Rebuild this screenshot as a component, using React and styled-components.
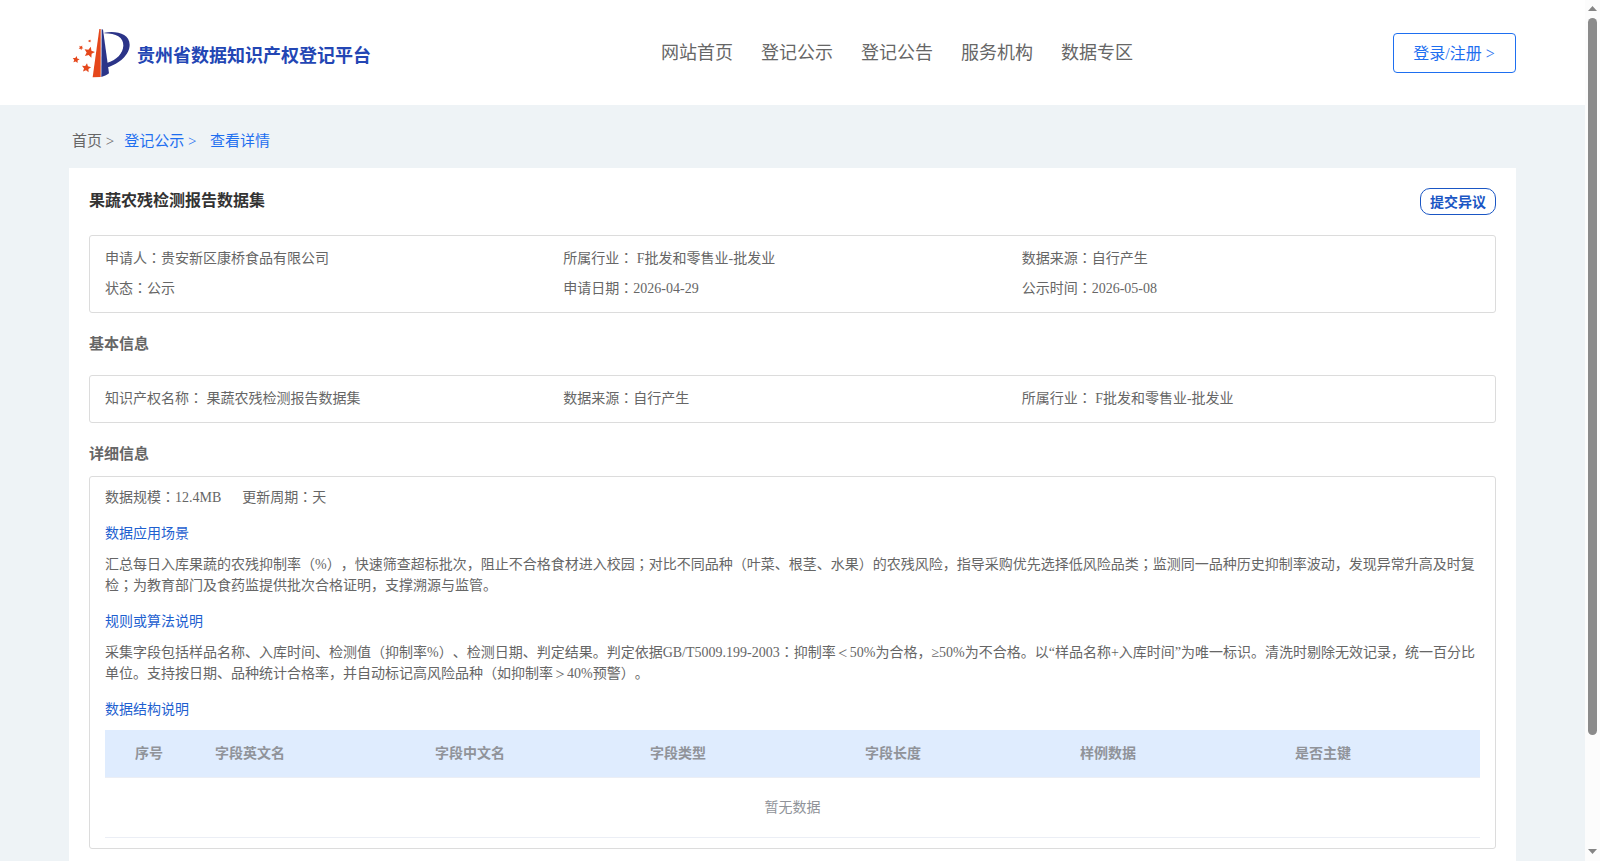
import React from "react";
import styled, { createGlobalStyle } from "styled-components";

const GlobalStyle = createGlobalStyle`
  * { box-sizing: border-box; }
  body {
    margin: 0;
    overflow: hidden;
    font-family: "Liberation Serif", "Noto Sans CJK SC", serif;
    font-size: 14px;
    color: #666;
    text-spacing-trim: space-all;
  }
  h1, h2, h3, p { margin: 0; font-weight: normal; }
`;

const Viewport = styled.div`
  display: flex;
  height: 100vh;
  overflow: hidden;
`;

const Page = styled.div`
  flex: 1;
  min-width: 0;
  background: #eef3f6;
`;

const Header = styled.header`
  display: flex;
  justify-content: space-between;
  height: 105px;
  padding: 0 69px;
  background: #fff;
`;

const Brand = styled.div`
  display: flex;
  align-items: flex-start;
  width: 592px;
  padding: 28px 0 0 3px;
`;

const BrandName = styled.h1`
  margin-left: 7px;
  font-size: 18px;
  line-height: 26px;
  padding-top: 15px;
  font-weight: bold;
  color: #2346b4;
  white-space: nowrap;
`;

const Nav = styled.nav`
  display: flex;
  gap: 28px;
  flex: 1;
  padding-top: 40px;
`;

const NavItem = styled.a`
  font-size: 18px;
  line-height: 26px;
  white-space: nowrap;
`;

const LoginButton = styled.button`
  width: 123px;
  height: 40px;
  margin-top: 33px;
  padding: 0 1px 2px 0;
  border: 1px solid #1e6ff0;
  border-radius: 4px;
  background: #fff;
  color: #1e6ff0;
  font: inherit;
  font-size: 16px;
`;

const Breadcrumb = styled.div`
  display: flex;
  height: 63px;
  padding: 26px 0 0 72px;
  font-size: 15px;
  line-height: 20px;
`;

const Crumb = styled.span`
  margin-right: ${(p) => p.$gap || 0}px;
  color: ${(p) => (p.$active ? "#1e6ff0" : "#666")};
  white-space: pre;
`;

const Card = styled.main`
  height: 900px;
  margin: 0 69px;
  padding: 20px;
  background: #fff;
`;

const TitleRow = styled.div`
  display: flex;
  justify-content: space-between;
  height: 47px;
`;

const Title = styled.h2`
  padding-top: 1px;
  font-size: 16px;
  line-height: 24px;
  font-weight: bold;
  color: #333;
`;

const ObjectButton = styled.button`
  width: 76px;
  height: 27px;
  padding: 0 0 2px;
  border: 1px solid #1a56c4;
  border-radius: 10px;
  background: #fff;
  color: #1a56c4;
  font: inherit;
  font-weight: bold;
`;

const InfoBox = styled.section`
  display: grid;
  grid-template-columns: repeat(3, 1fr);
  grid-auto-rows: 30px;
  padding: 8px 15px;
  border: 1px solid #dcdcdc;
  border-radius: 3px;
  line-height: 30px;
`;

const SectionTitle = styled.h3`
  height: ${(p) => p.$height}px;
  padding-top: 20px;
  font-size: 15px;
  line-height: 22px;
  font-weight: bold;
`;

const DetailBox = styled.section`
  height: 373px;
  padding: 10px 15px 0;
  border: 1px solid #dcdcdc;
  border-radius: 3px;
  line-height: 21px;
`;

const Facts = styled.div`
  display: flex;
  gap: 21px;
`;

const SubTitle = styled.h3`
  margin: 15px 0 10px;
  font-size: 14px;
  line-height: 21px;
  color: #1e5fd0;
`;

const Table = styled.div`
  border-bottom: 1px solid #ebeef5;
`;

const TableHead = styled.div`
  display: grid;
  grid-template-columns: 100px 220px repeat(3, 215px) 215px 1fr;
  height: 48px;
  border-bottom: 1px solid #ebeef5;
  background: #dfecfe;
  color: #909399;
  font-weight: bold;
  line-height: 47px;
`;

const HeadCell = styled.span`
  padding-left: 10px;
  &:first-child { padding-left: 30px; }
`;

const EmptyRow = styled.div`
  height: 59px;
  line-height: 59px;
  color: #909399;
  text-align: center;
`;

/* Colons and semicolons sit in the middle of their cell. */
const MidMark = styled.span`
  font-family: "Noto Sans CJK TC", sans-serif;
  line-height: 1;
`;

/* Full-width comparison signs are drawn small inside a full cell. */
const SmallSign = styled.span`
  padding: 0 2px;
  font-size: 10px;
  line-height: 1;
`;

const ScrollTrack = styled.div`
  display: flex;
  flex-direction: column;
  align-items: center;
  justify-content: space-between;
  width: 15px;
  padding: 6px 0 7px;
  background: #fcfcfc;
`;

const ScrollThumb = styled.div`
  width: 9px;
  height: 717px;
  margin: 7px 0 auto;
  border-radius: 5px;
  background: #8b8b8b;
`;

const Arrow = styled.svg`
  display: block;
  width: 9px;
  height: 5px;
  fill: #858585;
`;

const starPoints = (cx, cy, r, turn) =>
  Array.from({ length: 10 }, (_, i) => {
    const a = ((turn + i * 36 - 90) * Math.PI) / 180;
    const d = i % 2 ? r * 0.48 : r;
    return `${(cx + d * Math.cos(a)).toFixed(1)},${(cy + d * Math.sin(a)).toFixed(1)}`;
  }).join(" ");

const stars = [
  [88, 127, 17, 15],
  [48, 149, 11, 10],
  [79, 174, 14.5, 8],
  [63, 113, 7.5, 30],
  [89, 93, 5, 20],
];

function Logo() {
  return (
    <svg width="58" height="50" viewBox="36 54 174 150">
      <g fill="#e5471b">
        <path d="M118 57h4v144l-24 1z" />
        {stars.map(([x, y, r, t]) => (
          <polygon key={x} points={starPoints(x, y, r, t)} />
        ))}
      </g>
      <g fill="#2b3488">
        <path d="M125 57l4 2 18 131c-7 6-15 9-23 11z" />
        <path d="M133 68C170 61 209 72 209 104C209 134 178 161 142 172L140 159C170 150 189 130 190 107C191 82 168 70 133 70Z" />
      </g>
    </svg>
  );
}

function Prose({ children }) {
  return children.split(/([：；＜＞])/).map((part, i) => {
    if (part === "：" || part === "；") return <MidMark key={i}>{part}</MidMark>;
    if (part === "＜" || part === "＞") return <SmallSign key={i}>{part}</SmallSign>;
    return part;
  });
}

const navItems = ["网站首页", "登记公示", "登记公告", "服务机构", "数据专区"];

const summary = [
  "申请人：贵安新区康桥食品有限公司",
  "所属行业： F批发和零售业-批发业",
  "数据来源：自行产生",
  "状态：公示",
  "申请日期：2026-04-29",
  "公示时间：2026-05-08",
];

const basics = [
  "知识产权名称： 果蔬农残检测报告数据集",
  "数据来源：自行产生",
  "所属行业： F批发和零售业-批发业",
];

const usage =
  "汇总每日入库果蔬的农残抑制率（%），快速筛查超标批次，阻止不合格食材进入校园；对比不同品种（叶菜、根茎、水果）的农残风险，指导采购优先选择低风险品类；监测同一品种历史抑制率波动，发现异常升高及时复检；为教育部门及食药监提供批次合格证明，支撑溯源与监管。";

const rules =
  "采集字段包括样品名称、入库时间、检测值（抑制率%）、检测日期、判定结果。判定依据GB/T5009.199-2003：抑制率＜50%为合格，≥50%为不合格。以“样品名称+入库时间”为唯一标识。清洗时剔除无效记录，统一百分比单位。支持按日期、品种统计合格率，并自动标记高风险品种（如抑制率＞40%预警）。";

const columns = ["序号", "字段英文名", "字段中文名", "字段类型", "字段长度", "样例数据", "是否主键"];

export default function App() {
  return (
    <Viewport>
      <GlobalStyle />
      <Page>
        <Header>
          <Brand>
            <Logo />
            <BrandName>贵州省数据知识产权登记平台</BrandName>
          </Brand>
          <Nav>
            {navItems.map((t) => (
              <NavItem key={t}>{t}</NavItem>
            ))}
          </Nav>
          <LoginButton>登录/注册 &gt;</LoginButton>
        </Header>
        <Breadcrumb>
          <Crumb $gap={10}>首页 &gt;</Crumb>
          <Crumb $active $gap={13.5}>登记公示 &gt;</Crumb>
          <Crumb $active>查看详情</Crumb>
        </Breadcrumb>
        <Card>
          <TitleRow>
            <Title>果蔬农残检测报告数据集</Title>
            <ObjectButton>提交异议</ObjectButton>
          </TitleRow>
          <InfoBox>
            {summary.map((t) => (
              <span key={t}><Prose>{t}</Prose></span>
            ))}
          </InfoBox>
          <SectionTitle $height={62}>基本信息</SectionTitle>
          <InfoBox>
            {basics.map((t) => (
              <span key={t}><Prose>{t}</Prose></span>
            ))}
          </InfoBox>
          <SectionTitle $height={53}>详细信息</SectionTitle>
          <DetailBox>
            <Facts>
              <span><Prose>数据规模：12.4MB</Prose></span>
              <span><Prose>更新周期：天</Prose></span>
            </Facts>
            <SubTitle>数据应用场景</SubTitle>
            <p><Prose>{usage}</Prose></p>
            <SubTitle>规则或算法说明</SubTitle>
            <p><Prose>{rules}</Prose></p>
            <SubTitle>数据结构说明</SubTitle>
            <Table>
              <TableHead>
                {columns.map((t) => (
                  <HeadCell key={t}>{t}</HeadCell>
                ))}
              </TableHead>
              <EmptyRow>暂无数据</EmptyRow>
            </Table>
          </DetailBox>
        </Card>
      </Page>
      <ScrollTrack>
        <Arrow viewBox="0 0 9 5"><path d="M0 5L4.500 0L9 5z" /></Arrow>
        <ScrollThumb />
        <Arrow viewBox="0 0 9 5"><path d="M0 0h9L4.500 5z" /></Arrow>
      </ScrollTrack>
    </Viewport>
  );
}
